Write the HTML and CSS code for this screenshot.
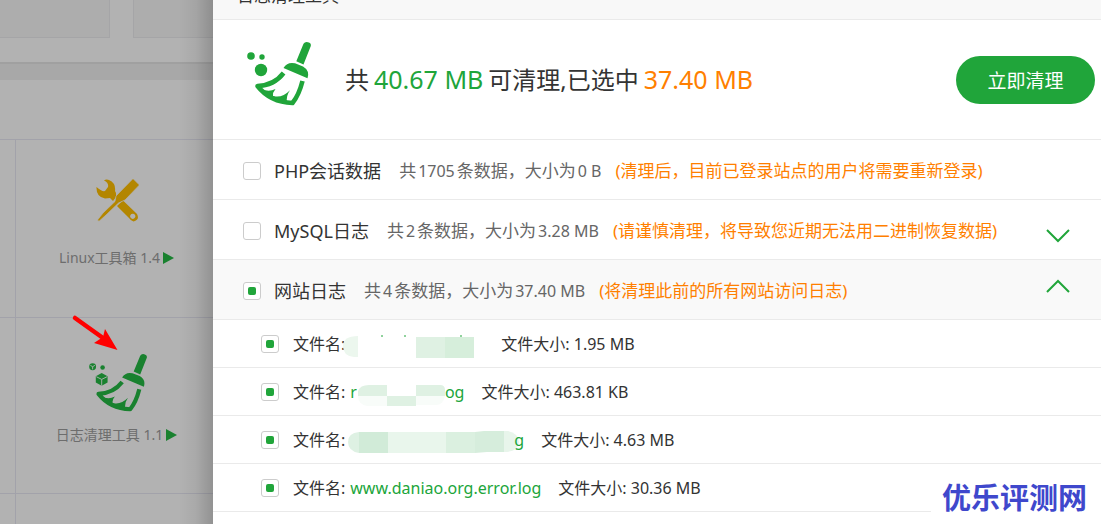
FILE: index.html
```html
<!DOCTYPE html>
<html lang="zh-CN">
<head>
<meta charset="utf-8">
<title>日志清理工具</title>
<link rel="stylesheet" href="styles.css">
</head>
<body>
<svg class="defs" aria-hidden="true">
  <symbol id="broom" viewBox="0 0 64 64" overflow="visible">
    <path fill="currentColor" d="M56.500 1.800Q58-.6 61 .2 64.500 1 63.800 4L56.500 22.500 49.300 19.300ZM36.500 26Q40.500 19.500 48 21.300L56 24.400Q63 28.500 60.500 36.200ZM12 46Q21 51 28.500 47Q25.500 50.500 26 54Q35 56.500 43 48.300Q38.800 54 40 61L30 59.500 18 53Z"/>
    <path fill="none" stroke="currentColor" stroke-width="4.600" stroke-linejoin="round" d="M36.600 31Q27 43.500 10.500 44Q23 60 45.500 61Q52 53 55.500 39"/>
  </symbol>
</svg>
<div class="screen">
  <aside class="backdrop">
    <div class="cards"><div class="card"></div><div class="card"></div></div>
    <div class="band"></div>
    <div class="blank"></div>
    <div class="tools">
      <div class="gutter"></div>
      <div class="tool">
        <svg class="tool-icon wrench" width="43" height="43" viewBox="0 0 43 43" aria-hidden="true">
          <path fill="currentColor" d="M.5 8Q0 18 9 19.500L14 19 17 22 20 18 20 14 19 12Q20 4 13 1Q10 0 8 1.500Q13 4 12 8L9 12Q6 13 .5 8ZM21 27L27 21.500 41 35Q44 41 37.500 42.500Q35 42 33 39ZM36.700 34.700a2.600 2.600 0 1 0 .1 0Z" fill-rule="evenodd"/>
          <path fill="currentColor" stroke="#b2b2b2" stroke-width=".7" d="M37-.4L43.400 6 29 21 22.500 24 10 36 3 42.300 1.500 41 7 34 19 22.500 20 17Z"/>
        </svg>
        <span class="tool-name">Linux工具箱 1.4<svg width="12" height="12" viewBox="0 0 12 12"><path fill="#19812f" d="M1 0 12 6 1 12Z"/></svg></span>
      </div>
      <div class="gutter"></div>
      <div class="tool">
        <svg class="tool-icon sweep" width="58" height="58" viewBox="0 0 64 64" aria-hidden="true">
          <use href="#broom"/>
          <circle cx="4" cy="14" r="3.800" fill="currentColor"/><circle cx="15" cy="15" r="2.500" fill="currentColor"/>
          <path fill="currentColor" d="M14 21l6.500 3.500v7L14 35l-6.500-3.500v-7Z"/>
          <path fill="none" stroke="#b2b2b2" stroke-width="1" d="M8 25l6 3 6-3M14 28v7M1.500 12.500l2.500 1.500 2.500-1.500M4 14v3"/>
        </svg>
        <span class="tool-name">日志清理工具 1.1<svg width="12" height="12" viewBox="0 0 12 12"><path fill="#19812f" d="M1 0 12 6 1 12Z"/></svg></span>
      </div>
      <div class="gutter"></div>
      <div class="tool"></div>
    </div>
    <svg class="pointer" width="48" height="38" viewBox="0 0 48 38" aria-hidden="true">
      <path stroke="red" stroke-width="4.500" stroke-linecap="round" d="M4 4 32 24"/>
      <path fill="red" d="M46.500 36 34 15 32 23 23 29Z"/>
    </svg>
  </aside>
  <main class="dialog">
    <header class="title">日志清理工具</header>
    <section class="summary">
      <svg class="logo" width="64" height="64" viewBox="0 0 64 64" aria-hidden="true">
        <use href="#broom"/>
        <circle cx="4" cy="14" r="3.800" fill="currentColor"/><circle cx="15" cy="15" r="2.700" fill="currentColor"/><circle cx="14" cy="28" r="6.200" fill="currentColor"/>
      </svg>
      <p class="total"><span>共</span><b class="green">40.67 MB</b><span>可清理,已选中</span><b class="orange">37.40 MB</b></p>
      <button class="clean" type="button">立即清理</button>
    </section>
    <section class="group">
      <label class="pick"><input type="checkbox"><span>PHP会话数据</span></label>
      <span class="info">共<i class="count">1705</i>条数据，大小为<i class="size">0 B</i></span>
      <span class="note">(清理后，目前已登录站点的用户将需要重新登录)</span>
    </section>
    <section class="group">
      <label class="pick"><input type="checkbox"><span>MySQL日志</span></label>
      <span class="info">共<i class="count">2</i>条数据，大小为<i class="size">3.28 MB</i></span>
      <span class="note">(请谨慎清理，将导致您近期无法用二进制恢复数据)</span>
      <button class="toggle closed" type="button" aria-label="展开"><svg width="24" height="14" viewBox="0 0 24 14"><path d="M1 1 12 12 23 1"/></svg></button>
    </section>
    <section class="group open">
      <label class="pick"><input type="checkbox" checked><span>网站日志</span></label>
      <span class="info">共<i class="count">4</i>条数据，大小为<i class="size">37.40 MB</i></span>
      <span class="note">(将清理此前的所有网站访问日志)</span>
      <button class="toggle" type="button" aria-label="收起"><svg width="24" height="14" viewBox="0 0 24 14"><path d="M1 13 12 2 23 13"/></svg></button>
    </section>
    <ul class="files">
      <li>
        <label class="file"><input type="checkbox" checked><span>文件名:</span></label>
        <svg class="mask first" width="144" height="24" viewBox="0 0 144 24" aria-hidden="true"><path fill="#ecf7ee" d="M15 2v21h-4Q0 22 0 12T15 2"/><path fill="#dff1e3" d="M73 3h29v21H73z"/><path fill="#d6eedb" d="M102 3h29v21h-29z"/><path stroke="#20a53a" d="M38 2h2M61 2h2M117 2h2"/></svg>
        <span class="file-size">文件大小: 1.95 MB</span>
      </li>
      <li>
        <label class="file"><input type="checkbox" checked><span>文件名:</span></label>
        <a class="name" href="#">r<svg class="mask inner" width="91" height="24" viewBox="0 0 91 24" aria-hidden="true"><path fill="#fff" d="M0 0h91v24H0z"/><path fill="#dff1e3" d="M1 14V9Q3 3 12 3h18v11zM30 14h29v10H30zM59 3h24q5 0 5 5v6H59z"/><path fill="#f8fcf9" d="M1 14h29v10H10Q1 22 1 14M59 14h29q-2 9-9 9H59z"/></svg>og</a>
        <span class="file-size">文件大小: 463.81 KB</span>
      </li>
      <li>
        <label class="file"><input type="checkbox" checked><span>文件名:</span></label>
        <a class="name long" href="#"><svg class="mask" width="172" height="24" viewBox="0 0 172 24" aria-hidden="true"><path fill="#def1e3" d="M11 2v21Q0 21 0 12T11 2"/><path fill="#d1ebd8" d="M11 2h29v21H11z"/><path fill="#e9f6ec" d="M40 2h58v21H40z"/><path fill="#dbf0e0" d="M98 2h29v21H98z"/><path fill="#d6eddc" d="M127 2l9-1h20v21h-17l-12 1z"/><path fill="#e8f5eb" d="M156 1h4q10 2 11 11-1 10-15 10z"/></svg>g</a>
        <span class="file-size">文件大小: 4.63 MB</span>
      </li>
      <li>
        <label class="file"><input type="checkbox" checked><span>文件名:</span></label>
        <a class="name" href="#">www.daniao.org.error.log</a>
        <span class="file-size">文件大小: 30.36 MB</span>
      </li>
    </ul>
  </main>
  <div class="watermark">优乐评测网</div>
</div>
</body>
</html>
```
FILE: styles.css
```css
* { box-sizing: border-box; }
body {
  margin: 0;
  color: #333;
  background: #fff;
  font-family: "Noto Sans", "Noto Sans CJK SC", sans-serif;
  font-size: 16px;
}
button { padding: 0; border: 0; font: inherit; cursor: pointer; }
i, b { font-style: normal; font-weight: 400; }
.defs { display: none; }
.screen {
  position: relative;
  display: grid;
  grid-template-columns: 213px 1fr;
  height: 100vh;
  overflow: hidden;
}

/* dimmed page behind the dialog */
.backdrop { position: relative; overflow: hidden; background: #b2b2b2; }
.backdrop::after {
  content: "";
  position: absolute;
  inset: 0 0 0 auto;
  width: 34px;
  background: linear-gradient(to right, transparent, rgba(0, 0, 0, .05) 50%, rgba(0, 0, 0, .18));
}
.cards { display: grid; grid-template-columns: 111px 111px; gap: 23px; height: 62px; padding-bottom: 24px; margin-left: -1px; }
.card { background: #adadad; border: 1px solid #a5a5a7; border-top: 0; }
.band { height: 18px; background: #a8a8a8; border-top: 2px solid #a0a0a0; }
.blank { height: 59px; }
.tools { display: grid; grid-template-columns: 16px 203px; grid-template-rows: 178px 176px 60px; }
.gutter, .tool { border-top: 1px solid #a2a2aa; }
.gutter { border-right: 1px solid #a2a2aa; }
.tool { display: flex; flex-direction: column; align-items: center; }
.tool-icon { flex: none; }
.wrench { margin: 39px 0 25px; color: #b38600; }
.sweep { margin: 36px 0 12px; color: #19812f; }
.tool-name { display: flex; align-items: center; gap: 2px; padding-right: 2px; line-height: 22px; font-size: 14px; color: #6d6d6d; white-space: nowrap; }
.pointer { position: absolute; left: 71px; top: 314px; fill: none; }

/* dialog */
.dialog { min-width: 0; margin-top: -23px; background: #fff; }
.title { height: 43px; padding-left: 24px; line-height: 38px; font-size: 17px; background: #f8f8f8; border-bottom: 1px solid #eaeaea; }
.summary { display: flex; align-items: center; height: 120px; padding: 0 6px 0 34px; border-bottom: 1px solid #eaeaea; }
.logo { margin-bottom: 12px; color: #20a53a; overflow: visible; }
.total { display: flex; align-items: baseline; gap: 5px; margin: 0 auto 0 34px; padding-bottom: 3px; font-size: 24px; white-space: nowrap; }
.total b { font-size: 25px; }
.green { color: #20a53a; }
.orange { color: #ff7f00; }
.clean { width: 139px; height: 48px; border-radius: 24px; background: #20a53a; color: #fff; font-size: 19px; }
.group { display: flex; align-items: center; height: 60px; padding: 3px 31px 0 30px; border-bottom: 1px solid #eaeaea; white-space: nowrap; }
.open { background: #f9f9f9; }
.pick, .file { display: flex; align-items: center; }
.pick { gap: 13px; font-size: 18px; }
.pick span, .info, .note { padding-bottom: 3px; }
input {
  appearance: none;
  width: 18px;
  height: 18px;
  margin: 0;
  border: 1px solid #ccc;
  border-radius: 3px;
  background: #fff;
}
input:checked { display: grid; place-items: center; }
input:checked::after { content: ""; width: 8px; height: 8px; border-radius: 2px; background: #20a53a; }
.info { margin-left: 18px; font-size: 17px; color: #666; }
.info i { font-size: 16px; }
.count { margin: 0 2px; }
.size { margin-left: 2px; }
.note { margin-left: 14px; font-size: 17px; color: #ff7f00; }
.toggle { display: flex; margin-left: auto; background: none; }
.toggle svg { fill: none; stroke: #20a53a; stroke-width: 2; }
.closed { margin-top: 10px; }
.open .toggle { margin-bottom: 11px; }
.files { margin: 0; padding: 0; list-style: none; }
.files li { display: flex; align-items: center; height: 48px; padding-left: 48px; border-bottom: 1px solid #eaeaea; white-space: nowrap; }
.file { gap: 14px; }
.file span, .file-size { padding-bottom: 1px; }
.name { display: flex; align-items: center; margin-left: 5px; color: #20a53a; text-decoration: none; }
.long { margin-left: 3px; }
.mask { flex: none; margin-top: 4px; }
.first { margin-left: -2px; }
.inner { margin-right: -3px; }
.long .mask { margin-right: -6px; }
.file-size { margin-left: 17px; }
.files > li > .mask + .file-size { margin-left: 14px; }

.watermark {
  position: absolute;
  right: 0;
  bottom: 0;
  width: 170px;
  height: 58px;
  padding-left: 11px;
  background: #fff;
  color: #3f48cc;
  font: 700 29px/60px "Noto Sans CJK SC", sans-serif;
}
```
